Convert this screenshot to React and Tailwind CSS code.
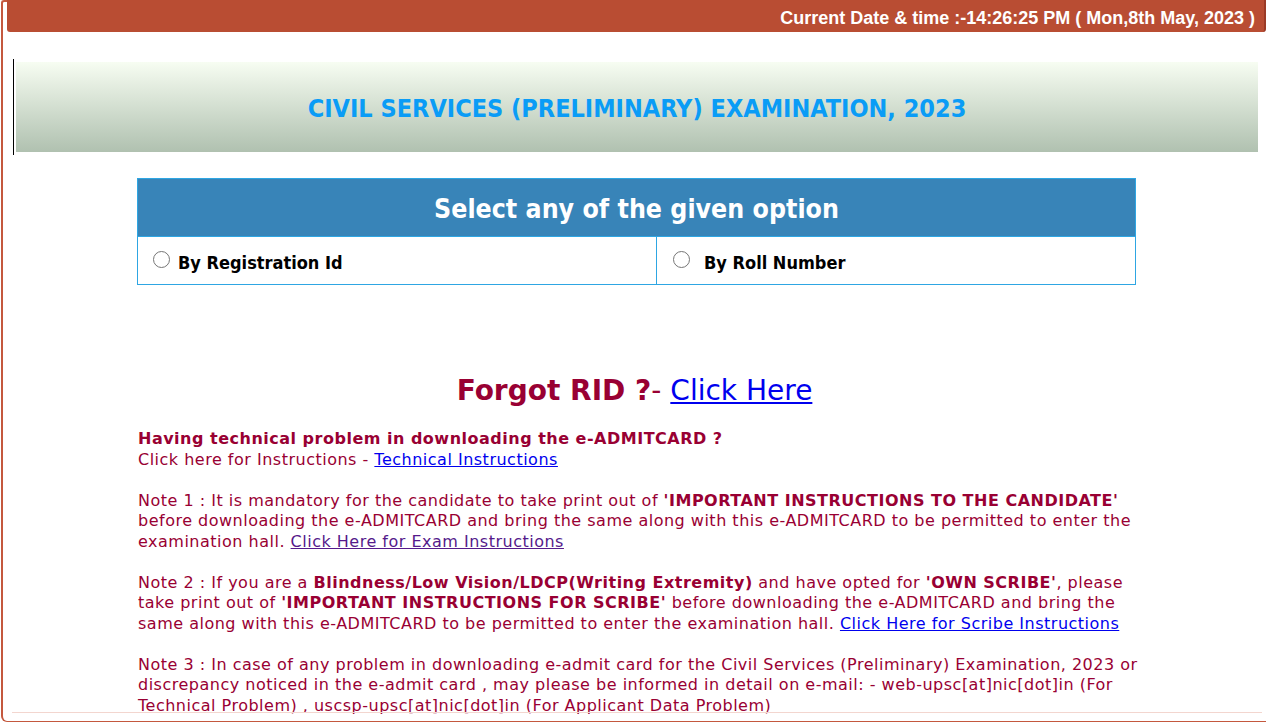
export default function App() {
  const cond = { fontFamily: '"DejaVu Sans Condensed", "DejaVu Sans", Verdana, sans-serif', fontStretch: 'condensed' };
  const reg = { fontFamily: '"DejaVu Sans", Verdana, sans-serif' };
  return (
    <div className="w-[1268px] h-[723px] overflow-hidden bg-white">
      <div className="relative h-[722px] border-l-2 border-t-2 border-b border-[#c4583e] rounded-bl-[6px] rounded-tl-[3px] ml-[1px] mr-[2px]">
        <div className="ml-[4px] -mt-[2px] h-[32px] bg-[#b94d33] rounded-b-[3px] border-r-2 border-[#9a3a26] flex items-end justify-end pr-[9px] pb-[2px]">
          <span className="text-white font-bold text-[18px] leading-[24px]" style={{ fontFamily: '"Liberation Sans", Arial, sans-serif' }}>
            Current Date &amp; time :-14:26:25 PM ( Mon,8th May, 2023 )
          </span>
        </div>

        <div className="mt-[27px] ml-[10px] mr-[8px] flex">
          <div className="w-px h-[96px] bg-black" />
          <div className="ml-[2px] mt-[3px] h-[90px] flex-1 bg-gradient-to-b from-[#f7fdf2] to-[#b0c1b0] flex items-center justify-center pt-[4px]">
            <span className="text-[#0a9cf6] font-bold text-[25px]" style={cond}>
              CIVIL SERVICES (PRELIMINARY) EXAMINATION, 2023
            </span>
          </div>
        </div>

        <div className="mt-[23px] ml-[134px] w-[999px] bg-[#2ea6e3] p-px flex flex-col gap-px" style={cond}>
          <div className="h-[57px] bg-[#3884b8] flex items-center justify-center pt-[3px]">
            <span className="text-white font-bold text-[26.5px]">Select any of the given option</span>
          </div>
          <div className="flex gap-px h-[47px]">
            <div className="w-[518px] bg-white flex items-center pl-[15px] pt-[3px]">
              <span className="w-[17px] h-[17px] rounded-full border border-solid border-[#767676] bg-white -mt-[6px]" />
              <span className="ml-[8px] font-bold text-[18px] text-black">By Registration Id</span>
            </div>
            <div className="flex-1 bg-white flex items-center pl-[16px] pt-[3px]">
              <span className="w-[17px] h-[17px] rounded-full border border-solid border-[#767676] bg-white -mt-[6px]" />
              <span className="ml-[14px] font-bold text-[18px] text-black">By Roll Number</span>
            </div>
          </div>
        </div>

        <div className="mt-[89px] text-center text-[28px] leading-[34px] text-[#990033]" style={reg}>
          <span className="font-bold">Forgot RID ?</span>- <a className="text-[#0000ee] underline">Click Here</a>
        </div>

        <div className="mt-[21px] ml-[135px] text-[16px] leading-[20.5px] tracking-[0.5px] text-[#990033] whitespace-nowrap" style={reg}>
          <div className="font-bold">Having technical problem in downloading the e-ADMITCARD ?</div>
          <div>Click here for Instructions - <a className="text-[#0000ee] underline">Technical Instructions</a></div>
          <div className="h-[20.5px]" />
          <div>Note 1 : It is mandatory for the candidate to take print out of <b>'IMPORTANT INSTRUCTIONS TO THE CANDIDATE'</b></div>
          <div>before downloading the e-ADMITCARD and bring the same along with this e-ADMITCARD to be permitted to enter the</div>
          <div>examination hall. <a className="text-[#551a8b] underline">Click Here for Exam Instructions</a></div>
          <div className="h-[20.5px]" />
          <div>Note 2 : If you are a <b>Blindness/Low Vision/LDCP(Writing Extremity)</b> and have opted for <b>'OWN SCRIBE'</b>, please</div>
          <div>take print out of <b>'IMPORTANT INSTRUCTIONS FOR SCRIBE'</b> before downloading the e-ADMITCARD and bring the</div>
          <div>same along with this e-ADMITCARD to be permitted to enter the examination hall. <a className="text-[#0000ee] underline">Click Here for Scribe Instructions</a></div>
          <div className="h-[20.5px]" />
          <div>Note 3 : In case of any problem in downloading e-admit card for the Civil Services (Preliminary) Examination, 2023 or</div>
          <div>discrepancy noticed in the e-admit card , may please be informed in detail on e-mail: - web-upsc[at]nic[dot]in (For</div>
          <div>Technical Problem) , uscsp-upsc[at]nic[dot]in (For Applicant Data Problem)</div>
        </div>

        <div className="absolute left-[9px] right-[4px] bottom-[8px] h-px bg-[#f3d6cf]" />
      </div>
    </div>
  );
}
